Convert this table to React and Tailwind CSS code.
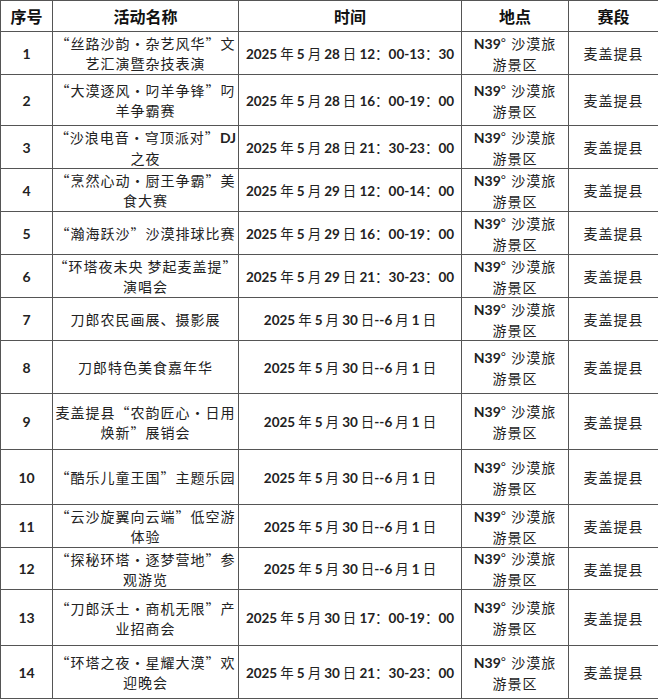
import React from "react";

const rows = [
  { n: "1", name: ["“丝路沙韵·杂艺风华”文", "艺汇演暨杂技表演"], t: "2025 年 5 月 28 日 12：00-13：30", h: "h-[43px]" },
  { n: "2", name: ["“大漠逐风·叼羊争锋”叼", "羊争霸赛"], t: "2025 年 5 月 28 日 16：00-19：00", h: "h-[51px]" },
  { n: "3", name: ["“沙浪电音·穹顶派对”DJ", "之夜"], t: "2025 年 5 月 28 日 21：30-23：00", h: "h-[43px]" },
  { n: "4", name: ["“烹然心动·厨王争霸”美", "食大赛"], t: "2025 年 5 月 29 日 12：00-14：00", h: "h-[43px]" },
  { n: "5", name: ["“瀚海跃沙”沙漠排球比赛"], t: "2025 年 5 月 29 日 16：00-19：00", h: "h-[43px]" },
  { n: "6", name: ["“环塔夜未央 梦起麦盖提”", "演唱会"], t: "2025 年 5 月 29 日 21：30-23：00", h: "h-[43px]" },
  { n: "7", name: ["刀郎农民画展、摄影展"], t: "2025 年 5 月 30 日--6 月 1 日", h: "h-[43px]" },
  { n: "8", name: ["刀郎特色美食嘉年华"], t: "2025 年 5 月 30 日--6 月 1 日", h: "h-[53px]" },
  { n: "9", name: ["麦盖提县“农韵匠心·日用", "焕新”展销会"], t: "2025 年 5 月 30 日--6 月 1 日", h: "h-[56px]" },
  { n: "10", name: ["“酷乐儿童王国”主题乐园"], t: "2025 年 5 月 30 日--6 月 1 日", h: "h-[55px]" },
  { n: "11", name: ["“云沙旋翼向云端”低空游", "体验"], t: "2025 年 5 月 30 日--6 月 1 日", h: "h-[43px]" },
  { n: "12", name: ["“探秘环塔·逐梦营地”参", "观游览"], t: "2025 年 5 月 30 日--6 月 1 日", h: "h-[42px]" },
  { n: "13", name: ["“刀郎沃土·商机无限”产", "业招商会"], t: "2025 年 5 月 30 日 17：00-19：00", h: "h-[56px]" },
  { n: "14", name: ["“环塔之夜·星耀大漠”欢", "迎晚会"], t: "2025 年 5 月 30 日 21：30-23：00", h: "h-[53px]" },
];

function T({ s }) {
  const parts = s.split(/([A-Za-z0-9\-]+)/);
  return (
    <>
      {parts.map((p, i) =>
        /^[A-Za-z0-9\-]+$/.test(p) ? (
          <span key={i} className="font-['Lato','Noto_Sans_CJK_SC',sans-serif] font-bold tracking-normal">
            {p}
          </span>
        ) : (
          <span key={i}>{p}</span>
        )
      )}
    </>
  );
}

const cell = "border border-[#555] text-center align-middle p-0 whitespace-nowrap";

export default function App() {
  return (
    <div className="w-[658px] h-[700px] bg-white font-['Noto_Sans_CJK_SC',sans-serif] text-[#222] overflow-hidden">
      <table className="border-collapse table-fixed w-[658px]">
        <colgroup>
          <col className="w-[52px]" />
          <col className="w-[186px]" />
          <col className="w-[223px]" />
          <col className="w-[107px]" />
          <col className="w-[90px]" />
        </colgroup>
        <thead>
          <tr className="h-[31px]">
            {["序号", "活动名称", "时间", "地点", "赛段"].map((h) => (
              <th key={h} className={cell + " text-[16px] font-bold text-[#111] leading-[20px]"}>
                {h}
              </th>
            ))}
          </tr>
        </thead>
        <tbody>
          {rows.map((r) => (
            <tr key={r.n} className={r.h}>
              <td className={cell + " text-[14px] leading-[20px]"}>
                <span className="font-['Lato',sans-serif] font-bold">{r.n}</span>
              </td>
              <td className={cell + " text-[14px] leading-[20px] tracking-[1px]"}>
                {r.name.map((l, i) => (
                  <div key={i}>
                    <T s={l} />
                  </div>
                ))}
              </td>
              <td className={cell + " text-[13.5px] leading-[20px] tracking-normal"}>
                <T s={r.t} />
              </td>
              <td className={cell + " text-[14px] leading-[20px] tracking-[1px]"}>
                <div>
                  <span className="font-['Lato',sans-serif] font-bold tracking-normal">N39</span>° 沙漠旅
                </div>
                <div>游景区</div>
              </td>
              <td className={cell + " text-[14px] leading-[20px] tracking-[1px]"}>麦盖提县</td>
            </tr>
          ))}
        </tbody>
      </table>
    </div>
  );
}
